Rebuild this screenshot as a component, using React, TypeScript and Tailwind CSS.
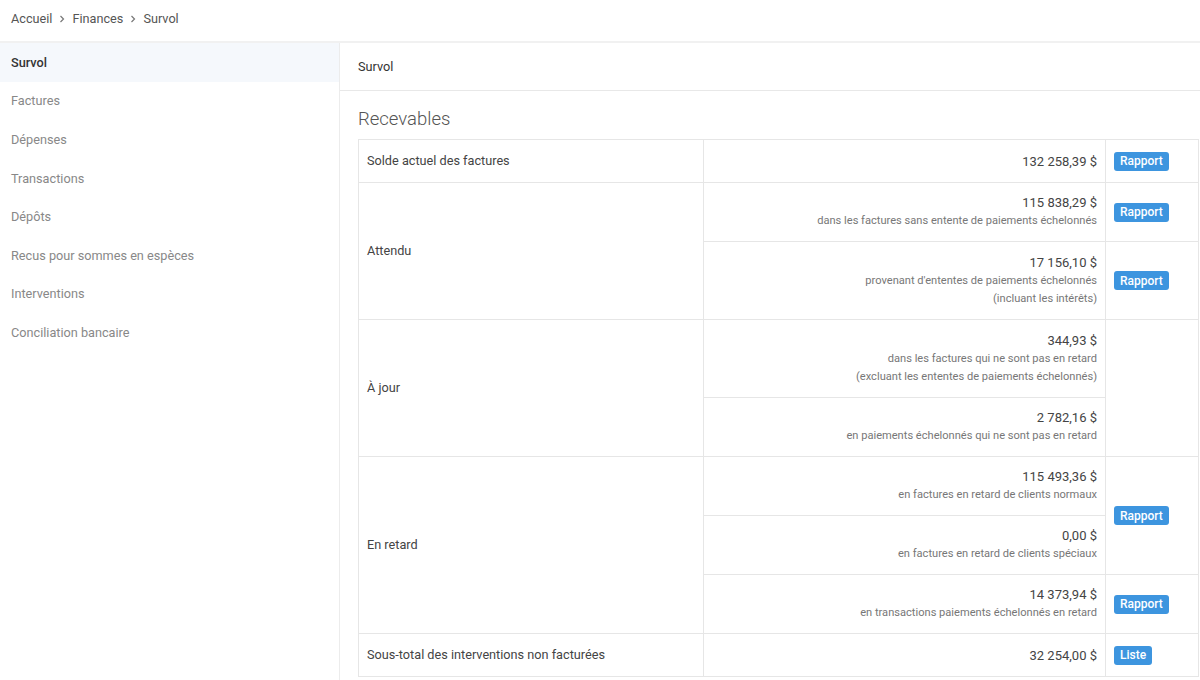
import React from 'react';

const menu = [
  'Survol',
  'Factures',
  'Dépenses',
  'Transactions',
  'Dépôts',
  'Recus pour sommes en espèces',
  'Interventions',
  'Conciliation bancaire',
];

function Btn({ label }: { label: string }) {
  return (
    <span className="inline-flex h-[19px] items-center rounded-[3px] bg-[#3d95df] px-[6px] text-[12px] font-medium leading-none text-white">
      {label}
    </span>
  );
}

function Amount({ value, lines = [] }: { value: string; lines?: string[] }) {
  return (
    <div className="text-right">
      <div className="text-[13px] leading-[19px] text-[#444]">{value}</div>
      {lines.map((l) => (
        <div key={l} className="text-[11.1px] leading-[18.5px] text-[#777]">
          {l}
        </div>
      ))}
    </div>
  );
}

function Chevron() {
  return (
    <svg width="6" height="8" viewBox="0 0 6 8" className="text-[#777]">
      <path d="M1.5 1 L4.5 4 L1.5 7" fill="none" stroke="currentColor" strokeWidth="1.2" />
    </svg>
  );
}

const td = 'border border-[#e6e6e6] px-[8px] align-middle';

export default function App() {
  return (
    <div className="h-[680px] w-[1200px] overflow-hidden bg-white font-['Roboto','Liberation_Sans',sans-serif] text-[#444]">
      {/* Breadcrumb */}
      <div className="flex h-[43px] items-center gap-[7px] border-b-2 border-[#f1f1f1] px-[11px] pb-[3px] text-[12.7px] text-[#555]">
        <span>Accueil</span>
        <Chevron />
        <span>Finances</span>
        <Chevron />
        <span>Survol</span>
      </div>

      <div className="flex h-[637px]">
        {/* Sidebar */}
        <div className="w-[340px] shrink-0 border-r border-[#ececec]">
          {menu.map((m, i) => (
            <div
              key={m}
              className={
                i === 0
                  ? 'flex h-[38.6px] items-center bg-[#f5f8fc] px-[11px] text-[12.7px] font-medium text-[#333]'
                  : 'flex h-[38.6px] items-center px-[11px] text-[12.7px] text-[#888]'
              }
            >
              {m}
            </div>
          ))}
        </div>

        {/* Main */}
        <div className="flex-1">
          <div className="flex h-[48px] items-center border-b border-[#e8e8e8] px-[18px] text-[12.7px] text-[#333]">
            Survol
          </div>
          <div className="pl-[18px] pr-px">
            <h2 className="mt-[16px] mb-[8px] text-[18.5px] font-light leading-[24px] text-[#555]">Recevables</h2>
            <table className="w-full border-collapse text-[12.7px]">
              <colgroup>
                <col className="w-[345px]" />
                <col className="w-[402px]" />
                <col />
              </colgroup>
              <tbody>
                <tr className="h-[43px]">
                  <td className={td}>Solde actuel des factures</td>
                  <td className={td}>
                    <Amount value="132 258,39 $" />
                  </td>
                  <td className={td}>
                    <Btn label="Rapport" />
                  </td>
                </tr>

                <tr className="h-[59px]">
                  <td className={td} rowSpan={2}>
                    Attendu
                  </td>
                  <td className={td}>
                    <Amount value="115 838,29 $" lines={['dans les factures sans entente de paiements échelonnés']} />
                  </td>
                  <td className={td}>
                    <Btn label="Rapport" />
                  </td>
                </tr>
                <tr className="h-[78px]">
                  <td className={td}>
                    <Amount
                      value="17 156,10 $"
                      lines={["provenant d'ententes de paiements échelonnés", '(incluant les intérêts)']}
                    />
                  </td>
                  <td className={td}>
                    <Btn label="Rapport" />
                  </td>
                </tr>

                <tr className="h-[78px]">
                  <td className={td} rowSpan={2}>
                    À jour
                  </td>
                  <td className={td}>
                    <Amount
                      value="344,93 $"
                      lines={[
                        'dans les factures qui ne sont pas en retard',
                        '(excluant les ententes de paiements échelonnés)',
                      ]}
                    />
                  </td>
                  <td className={td} rowSpan={2}></td>
                </tr>
                <tr className="h-[59px]">
                  <td className={td}>
                    <Amount value="2 782,16 $" lines={['en paiements échelonnés qui ne sont pas en retard']} />
                  </td>
                </tr>

                <tr className="h-[59px]">
                  <td className={td} rowSpan={3}>
                    En retard
                  </td>
                  <td className={td}>
                    <Amount value="115 493,36 $" lines={['en factures en retard de clients normaux']} />
                  </td>
                  <td className={td} rowSpan={2}>
                    <Btn label="Rapport" />
                  </td>
                </tr>
                <tr className="h-[59px]">
                  <td className={td}>
                    <Amount value="0,00 $" lines={['en factures en retard de clients spéciaux']} />
                  </td>
                </tr>
                <tr className="h-[59px]">
                  <td className={td}>
                    <Amount value="14 373,94 $" lines={['en transactions paiements échelonnés en retard']} />
                  </td>
                  <td className={td}>
                    <Btn label="Rapport" />
                  </td>
                </tr>

                <tr className="h-[43px]">
                  <td className={td}>Sous-total des interventions non facturées</td>
                  <td className={td}>
                    <Amount value="32 254,00 $" />
                  </td>
                  <td className={td}>
                    <Btn label="Liste" />
                  </td>
                </tr>
              </tbody>
            </table>
          </div>
        </div>
      </div>
    </div>
  );
}
